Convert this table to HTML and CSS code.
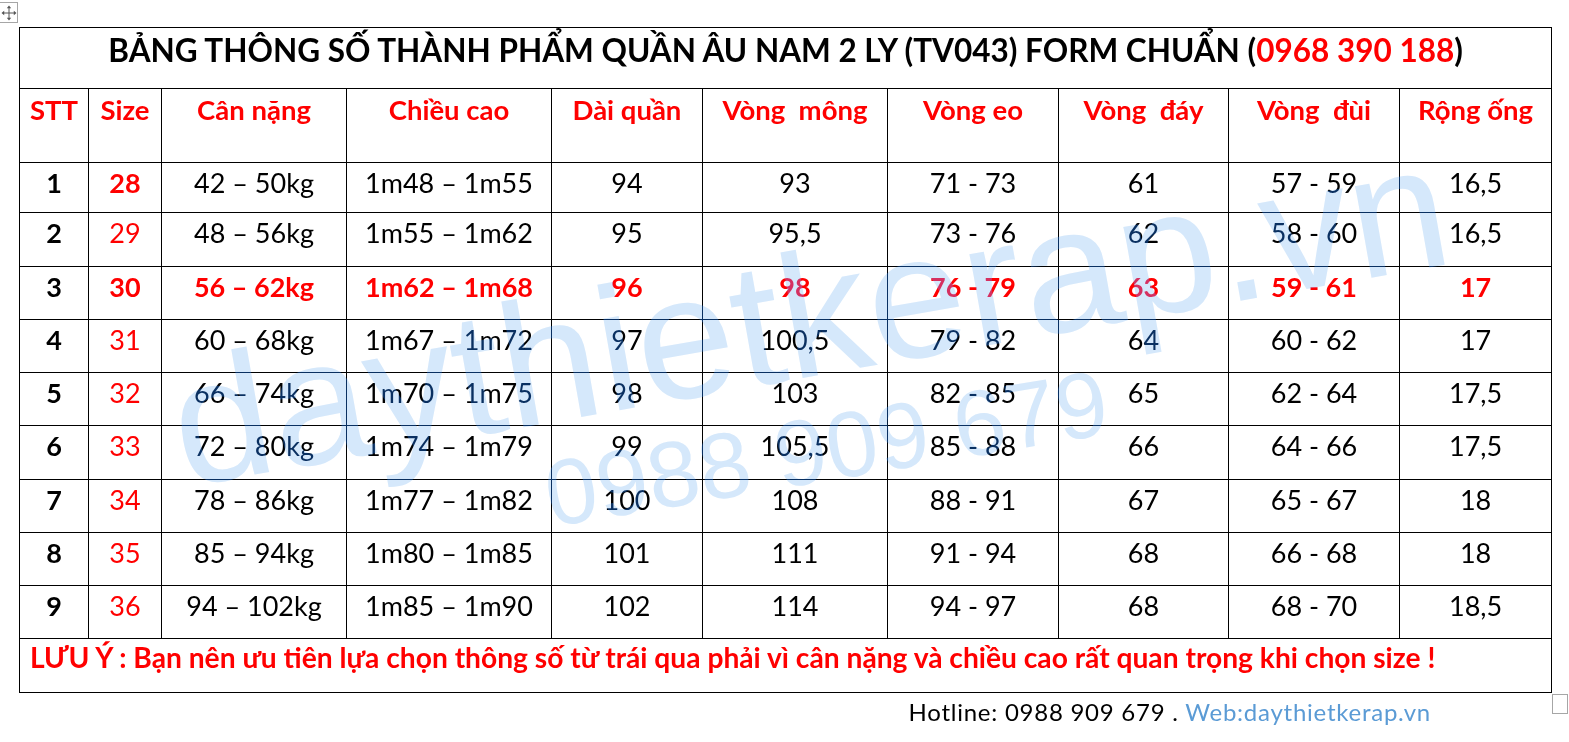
FILE: index.html
```html
<!DOCTYPE html>
<html lang="vi">
<head>
<meta charset="utf-8">
<title>Bảng thông số quần âu nam 2 ly</title>
<link rel="stylesheet" href="styles.css">
</head>
<body>
<div class="page">
  <div class="move-handle">
    <svg width="16" height="16" viewBox="0 0 16 16">
      <path d="M8 2.5V13.5M2.5 8H13.5" stroke="#555" stroke-width="1" fill="none"/>
      <path d="M8 0.5L5.8 3.2H10.2Z M8 15.5L5.8 12.8H10.2Z M0.5 8L3.2 5.8V10.2Z M15.5 8L12.8 5.8V10.2Z" fill="#555"/>
    </svg>
  </div>

  <table class="spec">
    <colgroup>
      <col class="c-stt"><col class="c-size"><col class="c-kg"><col class="c-cao"><col class="c-dai">
      <col class="c-mong"><col class="c-eo"><col class="c-day"><col class="c-dui"><col class="c-ong">
    </colgroup>
    <tr class="r-title">
      <td colspan="10" class="title">BẢNG THÔNG SỐ THÀNH PHẨM QUẦN ÂU NAM 2 LY (TV043) FORM CHUẨN (<span class="red">0968 390 188</span>)</td>
    </tr>
    <tr class="r-head">
      <th>STT</th><th>Size</th><th>Cân nặng</th><th>Chiều cao</th><th>Dài quần</th>
      <th>Vòng&nbsp; mông</th><th>Vòng eo</th><th>Vòng&nbsp; đáy</th><th>Vòng&nbsp; đùi</th><th>Rộng ống</th>
    </tr>
    <tr class="r-1">
      <td class="stt">1</td><td class="size bold">28</td><td>42 – 50kg</td><td>1m48 – 1m55</td><td>94</td>
      <td>93</td><td>71 - 73</td><td>61</td><td>57 - 59</td><td>16,5</td>
    </tr>
    <tr class="r-2">
      <td class="stt">2</td><td class="size">29</td><td>48 – 56kg</td><td>1m55 – 1m62</td><td>95</td>
      <td>95,5</td><td>73 - 76</td><td>62</td><td>58 - 60</td><td>16,5</td>
    </tr>
    <tr class="r-3 hl">
      <td class="stt">3</td><td class="size">30</td><td>56 – 62kg</td><td>1m62 – 1m68</td><td>96</td>
      <td>98</td><td>76 - 79</td><td>63</td><td>59 - 61</td><td>17</td>
    </tr>
    <tr class="r-4">
      <td class="stt">4</td><td class="size">31</td><td>60 – 68kg</td><td>1m67 – 1m72</td><td>97</td>
      <td>100,5</td><td>79 - 82</td><td>64</td><td>60 - 62</td><td>17</td>
    </tr>
    <tr class="r-5">
      <td class="stt">5</td><td class="size">32</td><td>66 – 74kg</td><td>1m70 – 1m75</td><td>98</td>
      <td>103</td><td>82 - 85</td><td>65</td><td>62 - 64</td><td>17,5</td>
    </tr>
    <tr class="r-6">
      <td class="stt">6</td><td class="size">33</td><td>72 – 80kg</td><td>1m74 – 1m79</td><td>99</td>
      <td>105,5</td><td>85 - 88</td><td>66</td><td>64 - 66</td><td>17,5</td>
    </tr>
    <tr class="r-7">
      <td class="stt">7</td><td class="size">34</td><td>78 – 86kg</td><td>1m77 – 1m82</td><td>100</td>
      <td>108</td><td>88 - 91</td><td>67</td><td>65 - 67</td><td>18</td>
    </tr>
    <tr class="r-8">
      <td class="stt">8</td><td class="size">35</td><td>85 – 94kg</td><td>1m80 – 1m85</td><td>101</td>
      <td>111</td><td>91 - 94</td><td>68</td><td>66 - 68</td><td>18</td>
    </tr>
    <tr class="r-9">
      <td class="stt">9</td><td class="size">36</td><td>94 – 102kg</td><td>1m85 – 1m90</td><td>102</td>
      <td>114</td><td>94 - 97</td><td>68</td><td>68 - 70</td><td>18,5</td>
    </tr>
    <tr class="r-note">
      <td colspan="10" class="note">LƯU Ý : Bạn nên ưu tiên lựa chọn thông số từ trái qua phải vì cân nặng và chiều cao rất quan trọng khi chọn size !</td>
    </tr>
  </table>

  <p class="footer">Hotline: 0988 909 679 . <span class="web">Web:daythietkerap.vn</span></p>

  <div class="resize-handle"></div>

  <svg class="watermark wm-screen" width="1569" height="742" viewBox="0 0 1569 742">
    <g id="wm">
      <text class="wm-site" x="184" y="487" transform="rotate(-10 184 487)">daythietkerap.vn</text>
      <text class="wm-phone" x="551" y="527" transform="rotate(-9.5 551 527)">0988 909 679</text>
    </g>
  </svg>
  <svg class="watermark wm-multiply" width="1569" height="742" viewBox="0 0 1569 742" aria-hidden="true">
    <use href="#wm"/>
  </svg>
</div>
</body>
</html>
```

FILE: styles.css
```css
html, body {
  margin: 0;
  padding: 0;
  background: #ffffff;
}

body {
  font-family: Lato, "Liberation Sans", sans-serif;
  color: #000;
}

.page {
  position: relative;
  width: 1569px;
  height: 742px;
  overflow: hidden;
  padding: 27px 0 0 19px;
  box-sizing: border-box;
  background: #fff;
}

/* Word table handles */
.move-handle {
  position: absolute;
  left: 0;
  top: 2px;
  width: 18px;
  height: 21px;
  border: 1px solid #a6a6a6;
  border-left: none;
  box-sizing: border-box;
  display: flex;
  align-items: center;
  justify-content: center;
  background: #fff;
}

.resize-handle {
  position: absolute;
  left: 1552px;
  top: 694px;
  width: 16px;
  height: 20px;
  border: 1px solid #a6a6a6;
  box-sizing: border-box;
  background: #fff;
}

/* Table */
.spec {
  border-collapse: collapse;
  table-layout: fixed;
  width: 1532px;
}

.c-stt  { width: 69px; }
.c-size { width: 73px; }
.c-kg   { width: 185px; }
.c-cao  { width: 205px; }
.c-dai  { width: 151px; }
.c-mong { width: 185px; }
.c-eo   { width: 171px; }
.c-day  { width: 170px; }
.c-dui  { width: 171px; }
.c-ong  { width: 152px; }

.spec td,
.spec th {
  box-sizing: border-box;
  border: 1px solid #000;
  padding: 4px 0 0;
  vertical-align: top;
  text-align: center;
  font-size: 27px;
  line-height: 32px;
  font-weight: 400;
  color: #000;
  white-space: nowrap;
  overflow: visible;
}

.spec th {
  font-size: 27.5px;
  line-height: 33px;
  font-weight: 700;
  color: #ff0000;
}

.r-title td { height: 61px; }
.r-head th  { height: 74px; }
.r-1 td { height: 50px; }
.r-2 td { height: 54px; }
.r-3 td { height: 53px; }
.r-4 td { height: 53px; }
.r-5 td { height: 53px; }
.r-6 td { height: 54px; }
.r-7 td { height: 53px; }
.r-8 td { height: 53px; }
.r-9 td { height: 53px; }
.r-note td { height: 54px; }

.spec td.title {
  font-size: 31.5px;
  line-height: 38px;
  font-weight: 700;
  padding-top: 3px;
}

.red { color: #ff0000; }

.spec td.stt {
  font-weight: 700;
  color: #000;
}

.spec td.size {
  color: #ff0000;
}

.spec td.bold {
  font-weight: 700;
}

.spec tr.hl td {
  font-weight: 700;
  color: #ff0000;
}

.spec tr.hl td.stt {
  color: #000;
}

.spec td.note {
  text-align: left;
  font-size: 28.2px;
  line-height: 34px;
  font-weight: 700;
  color: #ff0000;
  padding: 1px 0 0 10px;
}

/* Footer line */
.footer {
  margin: 5px 0 0;
  padding-right: 138px;
  text-align: right;
  font-size: 24px;
  line-height: 28px;
  letter-spacing: 0.75px;
  color: #000;
}

.web {
  color: #5b9bd5;
}

/* Watermark overlay (washout effect: dark ink turns navy, paper turns pale blue) */
.watermark {
  position: absolute;
  left: 0;
  top: 0;
  pointer-events: none;
}

.watermark text {
  font-family: "Liberation Sans", Arial, sans-serif;
}

.wm-screen {
  fill: rgb(12, 52, 98);
  mix-blend-mode: screen;
}

.wm-multiply {
  fill: rgb(213, 232, 251);
  mix-blend-mode: multiply;
}

.wm-site {
  font-size: 176px;
}

.wm-phone {
  font-size: 93px;
}
```
